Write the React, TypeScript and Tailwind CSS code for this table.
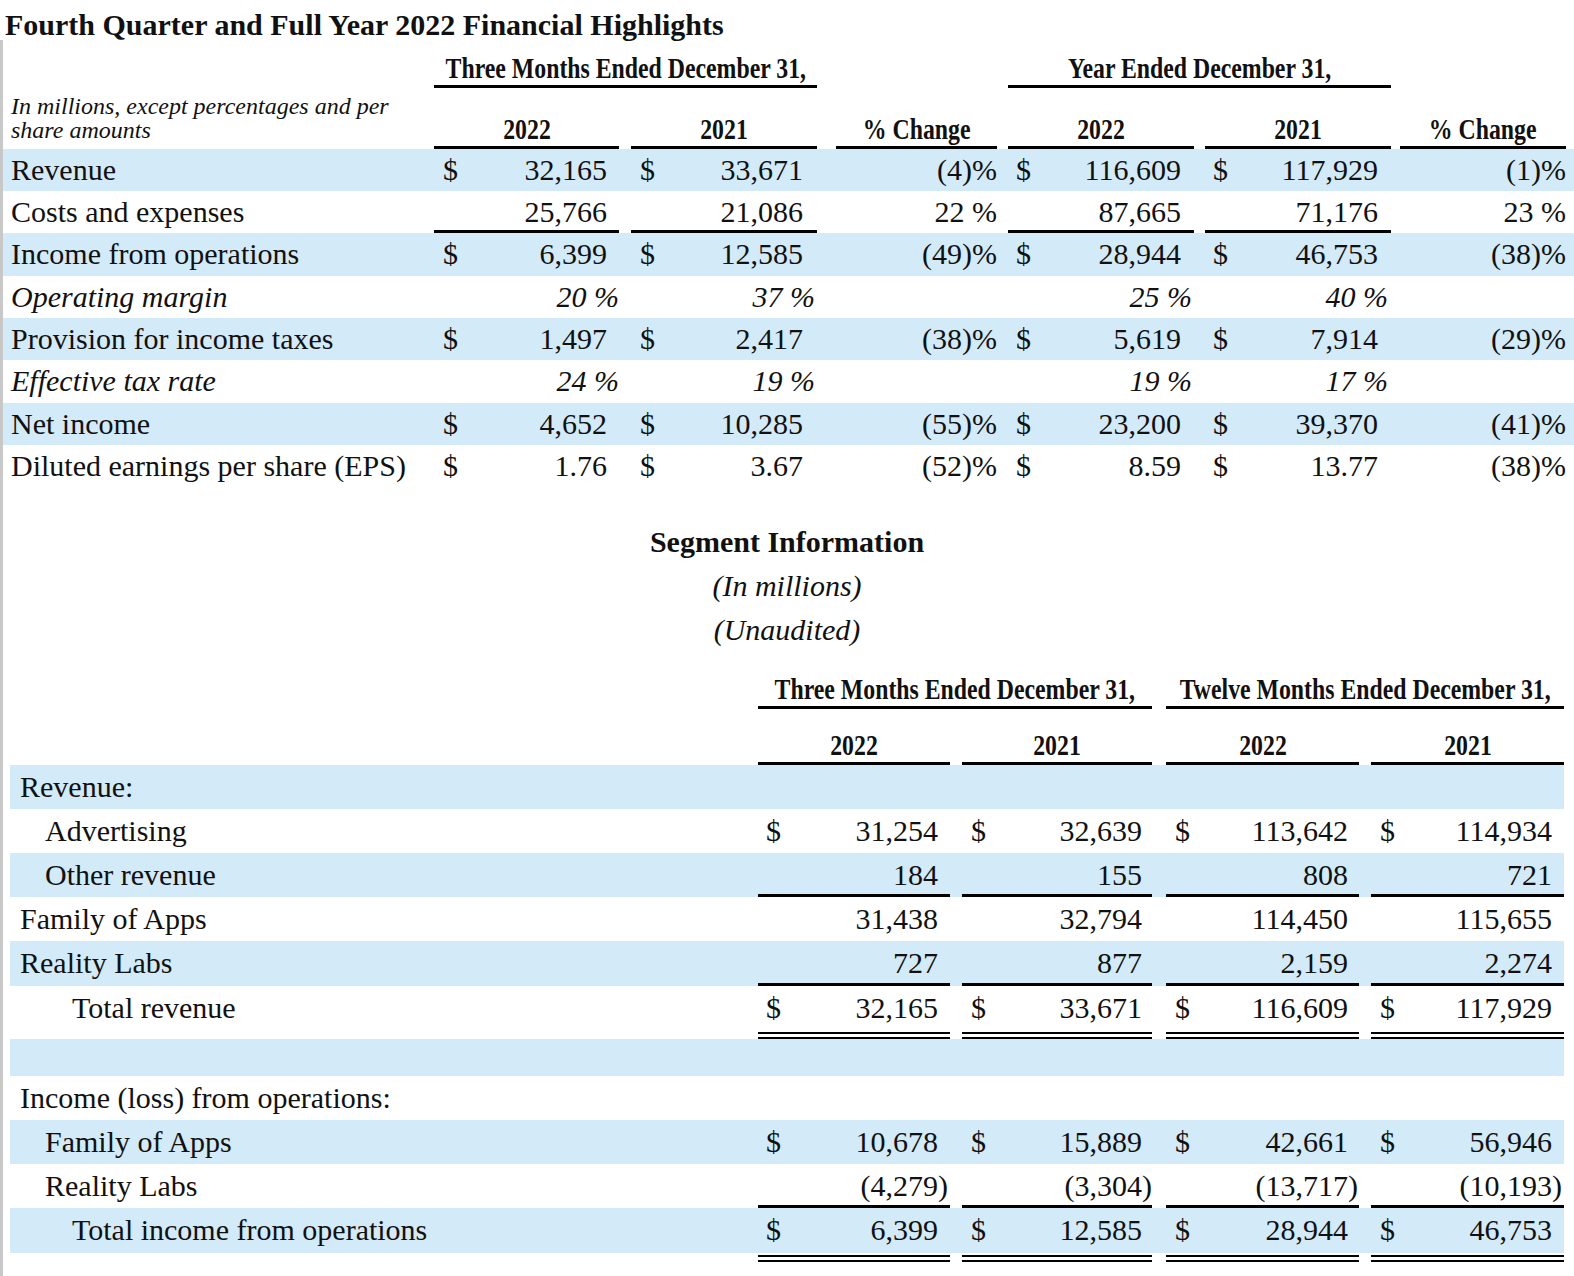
import React from 'react';

const cn = (...a: (string | false | undefined | null)[]) => a.filter(Boolean).join(' ');

const band = 'bg-[#d3eaf8]';

// condensed bold header text, as in the filing
function H({ children }: { children: React.ReactNode }) {
  return (
    <span className="inline-block whitespace-nowrap text-[29px] leading-[29px] font-bold scale-x-[0.82]">
      {children}
    </span>
  );
}

// ---- top table ----
const topW = ['w-[185px]', 'w-[186px] ml-[12px]', 'w-[161px] ml-[19px]', 'w-[186px] ml-[11px]', 'w-[186px] ml-[11px]', 'w-[166px] ml-[9px]'];
const topPl = ['pl-[9px]', 'pl-[9px]', '', 'pl-[8px]', 'pl-[8px]', ''];
const topPr = ['pr-[12px]', 'pr-[14px]', '', 'pr-[13px]', 'pr-[13px]', ''];
const topPrIt = ['pr-[0px]', 'pr-[2px]', '', 'pr-[2px]', 'pr-[3px]', ''];

interface TopRowData {
  label: string;
  blue?: boolean;
  it?: boolean;
  d?: boolean;
  line?: boolean;
  v: string[]; // q22, q21, qchg, y22, y21, ychg
}

const topRows: TopRowData[] = [
  { label: 'Revenue', blue: true, d: true, v: ['32,165', '33,671', '(4)%', '116,609', '117,929', '(1)%'] },
  { label: 'Costs and expenses', line: true, v: ['25,766', '21,086', '22 %', '87,665', '71,176', '23 %'] },
  { label: 'Income from operations', blue: true, d: true, v: ['6,399', '12,585', '(49)%', '28,944', '46,753', '(38)%'] },
  { label: 'Operating margin', it: true, v: ['20 %', '37 %', '', '25 %', '40 %', ''] },
  { label: 'Provision for income taxes', blue: true, d: true, v: ['1,497', '2,417', '(38)%', '5,619', '7,914', '(29)%'] },
  { label: 'Effective tax rate', it: true, v: ['24 %', '19 %', '', '19 %', '17 %', ''] },
  { label: 'Net income', blue: true, d: true, v: ['4,652', '10,285', '(55)%', '23,200', '39,370', '(41)%'] },
  { label: 'Diluted earnings per share (EPS)', d: true, v: ['1.76', '3.67', '(52)%', '8.59', '13.77', '(38)%'] },
];

function TopRow({ r }: { r: TopRowData }) {
  return (
    <div className={cn('flex h-[42.4px] leading-[42.4px] text-[30px]', r.blue && band)}>
      <div className={cn('w-[431px] pl-[8px] whitespace-nowrap', r.it && 'italic')}>{r.label}</div>
      {r.v.map((v, i) =>
        i === 2 || i === 5 ? (
          <div key={i} className={cn(topW[i], 'text-right whitespace-nowrap')}>{v}</div>
        ) : (
          <div
            key={i}
            className={cn(topW[i], 'flex justify-between whitespace-nowrap', r.it && 'italic', r.line && 'border-b-[3px] border-black')}
          >
            <span className={topPl[i]}>{r.d ? '$' : ''}</span>
            <span className={r.it ? topPrIt[i] : topPr[i]}>{v}</span>
          </div>
        )
      )}
    </div>
  );
}

// ---- segment table ----
const segW = ['w-[192px]', 'w-[190px] ml-[12px]', 'w-[193px] ml-[14px]', 'w-[193px] ml-[12px]'];
const segPl = ['pl-[8px]', 'pl-[9px]', 'pl-[9px]', 'pl-[9px]'];
const segPr = ['pr-[12px]', 'pr-[10px]', 'pr-[11px]', 'pr-[12px]'];
const segPrNeg = ['pr-[2px]', 'pr-[0px]', 'pr-[1px]', 'pr-[2px]'];
const indent = ['pl-[10px]', 'pl-[35px]', 'pl-[62px]'];

interface SegRowData {
  label?: string;
  lvl?: number;
  blue?: boolean;
  d?: boolean;
  line?: boolean;
  dbl?: boolean;
  neg?: boolean;
  h?: string;
  v?: string[];
}

const segRows: SegRowData[] = [
  { label: 'Revenue:', blue: true },
  { label: 'Advertising', lvl: 1, d: true, v: ['31,254', '32,639', '113,642', '114,934'] },
  { label: 'Other revenue', lvl: 1, blue: true, line: true, v: ['184', '155', '808', '721'] },
  { label: 'Family of Apps', v: ['31,438', '32,794', '114,450', '115,655'] },
  { label: 'Reality Labs', blue: true, line: true, v: ['727', '877', '2,159', '2,274'] },
  { label: 'Total revenue', lvl: 2, d: true, dbl: true, v: ['32,165', '33,671', '116,609', '117,929'] },
  { blue: true, h: 'h-[37px]' },
  { label: 'Income (loss) from operations:' },
  { label: 'Family of Apps', lvl: 1, blue: true, d: true, v: ['10,678', '15,889', '42,661', '56,946'] },
  { label: 'Reality Labs', lvl: 1, line: true, neg: true, v: ['(4,279)', '(3,304)', '(13,717)', '(10,193)'] },
  { label: 'Total income from operations', lvl: 2, blue: true, d: true, dbl: true, v: ['6,399', '12,585', '28,944', '46,753'] },
];

function SegRow({ r }: { r: SegRowData }) {
  return (
    <>
      <div className={cn('flex ml-[7px] w-[1554px] leading-[44px] text-[30px]', r.h ?? 'h-[44.2px]', r.blue && band)}>
        <div className={cn('w-[748px] whitespace-nowrap', indent[r.lvl ?? 0])}>{r.label}</div>
        {r.v &&
          r.v.map((v, i) => (
            <div key={i} className={cn(segW[i], 'flex justify-between whitespace-nowrap', r.line && 'border-b-[3px] border-black')}>
              <span className={segPl[i]}>{r.d ? '$' : ''}</span>
              <span className={r.neg ? segPrNeg[i] : segPr[i]}>{v}</span>
            </div>
          ))}
      </div>
      {r.dbl && (
        <div className="flex ml-[7px] h-[9px]">
          <div className="w-[748px]" />
          {segW.map((w, i) => (
            <div key={i} className={cn(w, 'mt-[2px] h-[7px] border-b-[7px] border-double border-black')} />
          ))}
        </div>
      )}
    </>
  );
}

export default function App() {
  return (
    <div className="w-[1574px] min-h-[1276px] bg-white text-[#111] font-['Liberation_Serif','Times_New_Roman',serif]">
      <h1 className="pl-[5px] pt-[10px] text-[30px] leading-[30px] font-bold whitespace-nowrap">
        Fourth Quarter and Full Year 2022 Financial Highlights
      </h1>

      <div className="border-l-[3px] border-[#c8c8c8] min-h-[1236px]">
        {/* top table header */}
        <div className="flex items-end h-[48px]">
          <div className="w-[431px]" />
          <div className="w-[383px] flex justify-center pb-[2px] border-b-[3px] border-black">
            <H>Three Months Ended December 31,</H>
          </div>
          <div className="w-[383px] ml-[191px] flex justify-center pb-[2px] border-b-[3px] border-black">
            <H>Year Ended December 31,</H>
          </div>
        </div>
        <div className="flex items-end h-[60.5px]">
          <div className="w-[431px] pl-[8px] pb-[7px] italic text-[24px] leading-[24px]">
            In millions, except percentages and per
            <br />
            share amounts
          </div>
          {['2022', '2021', '% Change', '2022', '2021', '% Change'].map((t, i) => (
            <div key={i} className={cn(topW[i], 'flex justify-center pb-[2px] border-b-[3px] border-black')}>
              <H>{t}</H>
            </div>
          ))}
        </div>
        {topRows.map((r, i) => (
          <TopRow key={i} r={r} />
        ))}

        {/* segment information */}
        <div className="mt-[32px] -ml-[3px] text-center text-[30px] leading-[44px]">
          <div className="font-bold">Segment Information</div>
          <div className="italic">(In millions)</div>
          <div className="italic">(Unaudited)</div>
        </div>

        <div className="flex items-end h-[57px] ml-[7px]">
          <div className="w-[748px]" />
          <div className="w-[394px] flex justify-center pb-[2px] border-b-[3px] border-black">
            <H>Three Months Ended December 31,</H>
          </div>
          <div className="w-[398px] ml-[14px] flex justify-center pb-[2px] border-b-[3px] border-black">
            <H>Twelve Months Ended December 31,</H>
          </div>
        </div>
        <div className="flex items-end h-[56px] ml-[7px]">
          <div className="w-[748px]" />
          {['2022', '2021', '2022', '2021'].map((t, i) => (
            <div key={i} className={cn(segW[i], 'flex justify-center pb-[2px] border-b-[3px] border-black')}>
              <H>{t}</H>
            </div>
          ))}
        </div>
        {segRows.map((r, i) => (
          <SegRow key={i} r={r} />
        ))}
      </div>
    </div>
  );
}
